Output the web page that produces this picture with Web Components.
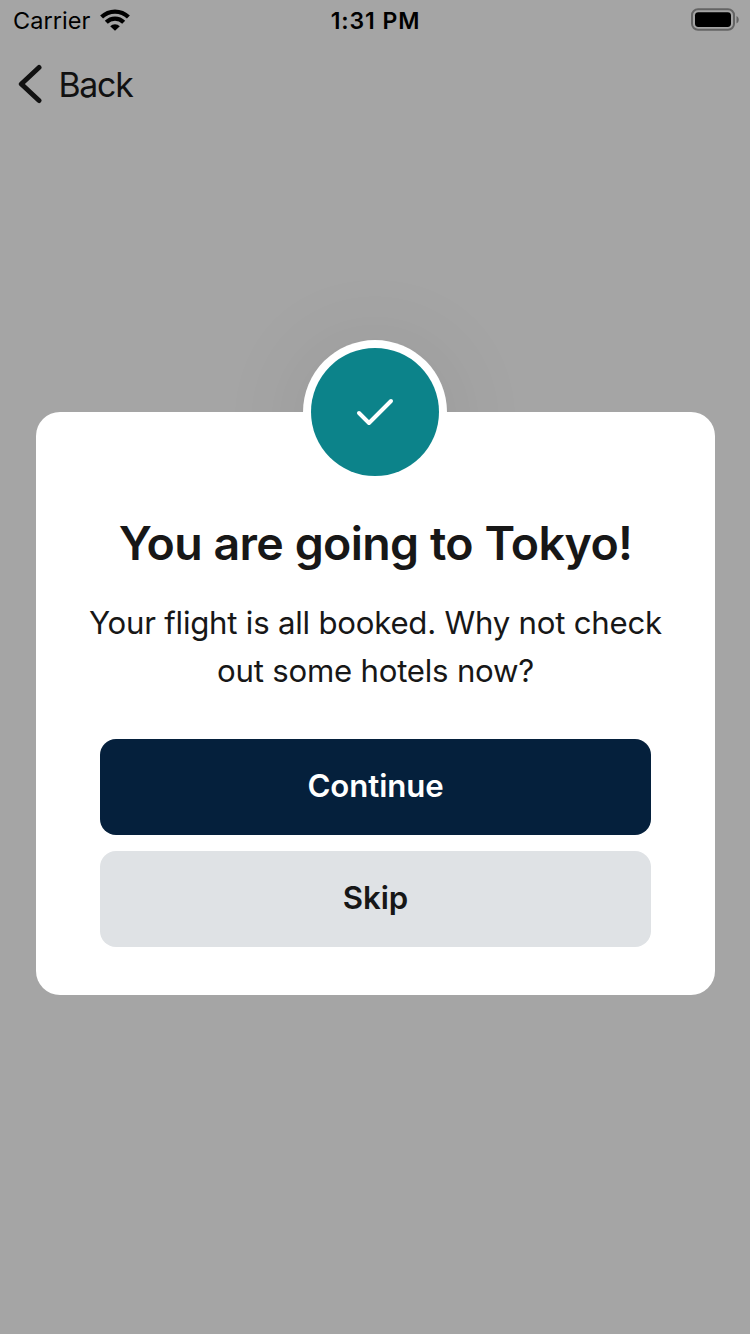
<!DOCTYPE html>
<html lang="en"><head><meta charset="utf-8"><title>Booking confirmed</title>
<style>html,body{margin:0;height:100%;background:#a5a5a5}body{font-family:Inter,"Liberation Sans",sans-serif;overflow:hidden}</style></head>
<body><booking-screen></booking-screen>
<script>
const define=(name,html)=>customElements.define(name,class extends HTMLElement{
  constructor(){super();const t=document.createElement('template');t.innerHTML=html;
    this.attachShadow({mode:'open'}).append(t.content.cloneNode(true));}
});
define('status-bar',`<style>
:host{display:grid;grid-template-columns:1fr auto 1fr;align-items:center;height:40px;padding:0 12px 0 13px;box-sizing:border-box;color:#000;font-size:23.5px;line-height:40px}
.left{display:flex;align-items:center;gap:10px}.carrier{letter-spacing:.05px;padding-top:1px;height:39px}
.time{font-weight:600;letter-spacing:.9px;font-size:23px;padding-top:1px;height:39px}
.right{display:flex;justify-content:flex-end;margin-right:-1px}svg{display:block}
</style><div class="left"><span class="carrier">Carrier</span>
<svg width="30" height="22" viewBox="0 0 30 22"><g fill="none" stroke="#000" stroke-width="4.200"><path d="M1.6 8.1a19.2 19.2 0 0 1 26.8 0"/><path d="M6.3 13.200a12.3 12.3 0 0 1 17.4 0"/></g><path d="M10.2 17.3a6.8 6.8 0 0 1 9.6 0L15 21.8z"/></svg></div>
<span class="time">1:31 PM</span>
<div class="right"><svg width="49" height="24" viewBox="0 0 49 24"><rect x="2" y="1.2" width="42" height="20.600" rx="6" fill="none" stroke="#646464" stroke-width="2"/><rect x="5" y="4.200" width="36" height="14.800" rx="3.4"/><path d="M46.500 8c3 1.500 3 6 0 7.500z" fill="#646464"/></svg></div>`);
define('back-link',`<style>
:host{display:flex;align-items:center;gap:15.500px;height:88px;padding-left:17px;color:#111;font-size:33.800px;letter-spacing:-1.25px}svg{display:block}
</style><svg width="26" height="40" viewBox="0 0 26 40"><path d="M22 3.500 4.300 20 22 36.500" fill="none" stroke="#111" stroke-width="5" stroke-linecap="round" stroke-linejoin="round"/></svg><span><slot></slot></span>`);
define('success-badge',`<style>
:host{display:block;width:144px;height:144px}
.ring{position:absolute;inset:0;z-index:-1;border-radius:50%;background:#fff;box-shadow:0 8px 96px rgba(0,0,0,.09)}
.disc{width:128px;height:128px;margin:8px;border-radius:50%;background:#0c838a;display:grid;place-items:center}
</style><div class="ring"></div><div class="disc"><svg width="40" height="40" viewBox="0 0 40 40"><path d="m4 21 10 10L36 9" fill="none" stroke="#fff" stroke-width="4" stroke-linecap="round" stroke-linejoin="round"/></svg></div>`);
define('action-button',`<style>
:host{display:block}button{display:block;width:100%;height:96px;border:0;border-radius:16px;padding:0 0 2px;font:600 31.200px/48px Inter,"Liberation Sans",sans-serif;letter-spacing:-.1px;background:#dfe2e5;color:#171717}
:host([primary]) button{background:#05203c;color:#fff}
</style><button><slot></slot></button>`);
define('dialog-card',`<style>
:host{display:block;position:relative;box-sizing:border-box;width:679px;height:583px;margin:284px 0 0 36px;padding-top:99px;color:#171717;text-align:center;z-index:0}
.surface{position:absolute;inset:0;border-radius:24px;background:#fff;z-index:-1}
success-badge{position:absolute;top:-72px;left:267px}
h1{margin:0;font-size:46.500px;line-height:64px;font-weight:600;letter-spacing:-.65px;word-spacing:.4px}
p{margin:24px 0 44px;font-size:31.200px;line-height:48px;letter-spacing:-.23px}
.actions{display:grid;gap:16px;padding:0 64px}
</style><success-badge></success-badge><div class="surface"></div>
<h1><slot name="title"></slot></h1><p><slot></slot></p><div class="actions"><slot name="actions"></slot></div>`);
define('booking-screen',`<style>
:host{display:flex;flex-direction:column;height:1334px;width:750px;background:#a5a5a5}
dialog-card{flex:none}
</style><status-bar></status-bar><back-link>Back</back-link>
<dialog-card><span slot="title">You are going to Tokyo!</span>Your flight is all booked. Why not check<br>out some hotels now?<action-button slot="actions" primary>Continue</action-button><action-button slot="actions">Skip</action-button></dialog-card>`);
</script></body></html>
